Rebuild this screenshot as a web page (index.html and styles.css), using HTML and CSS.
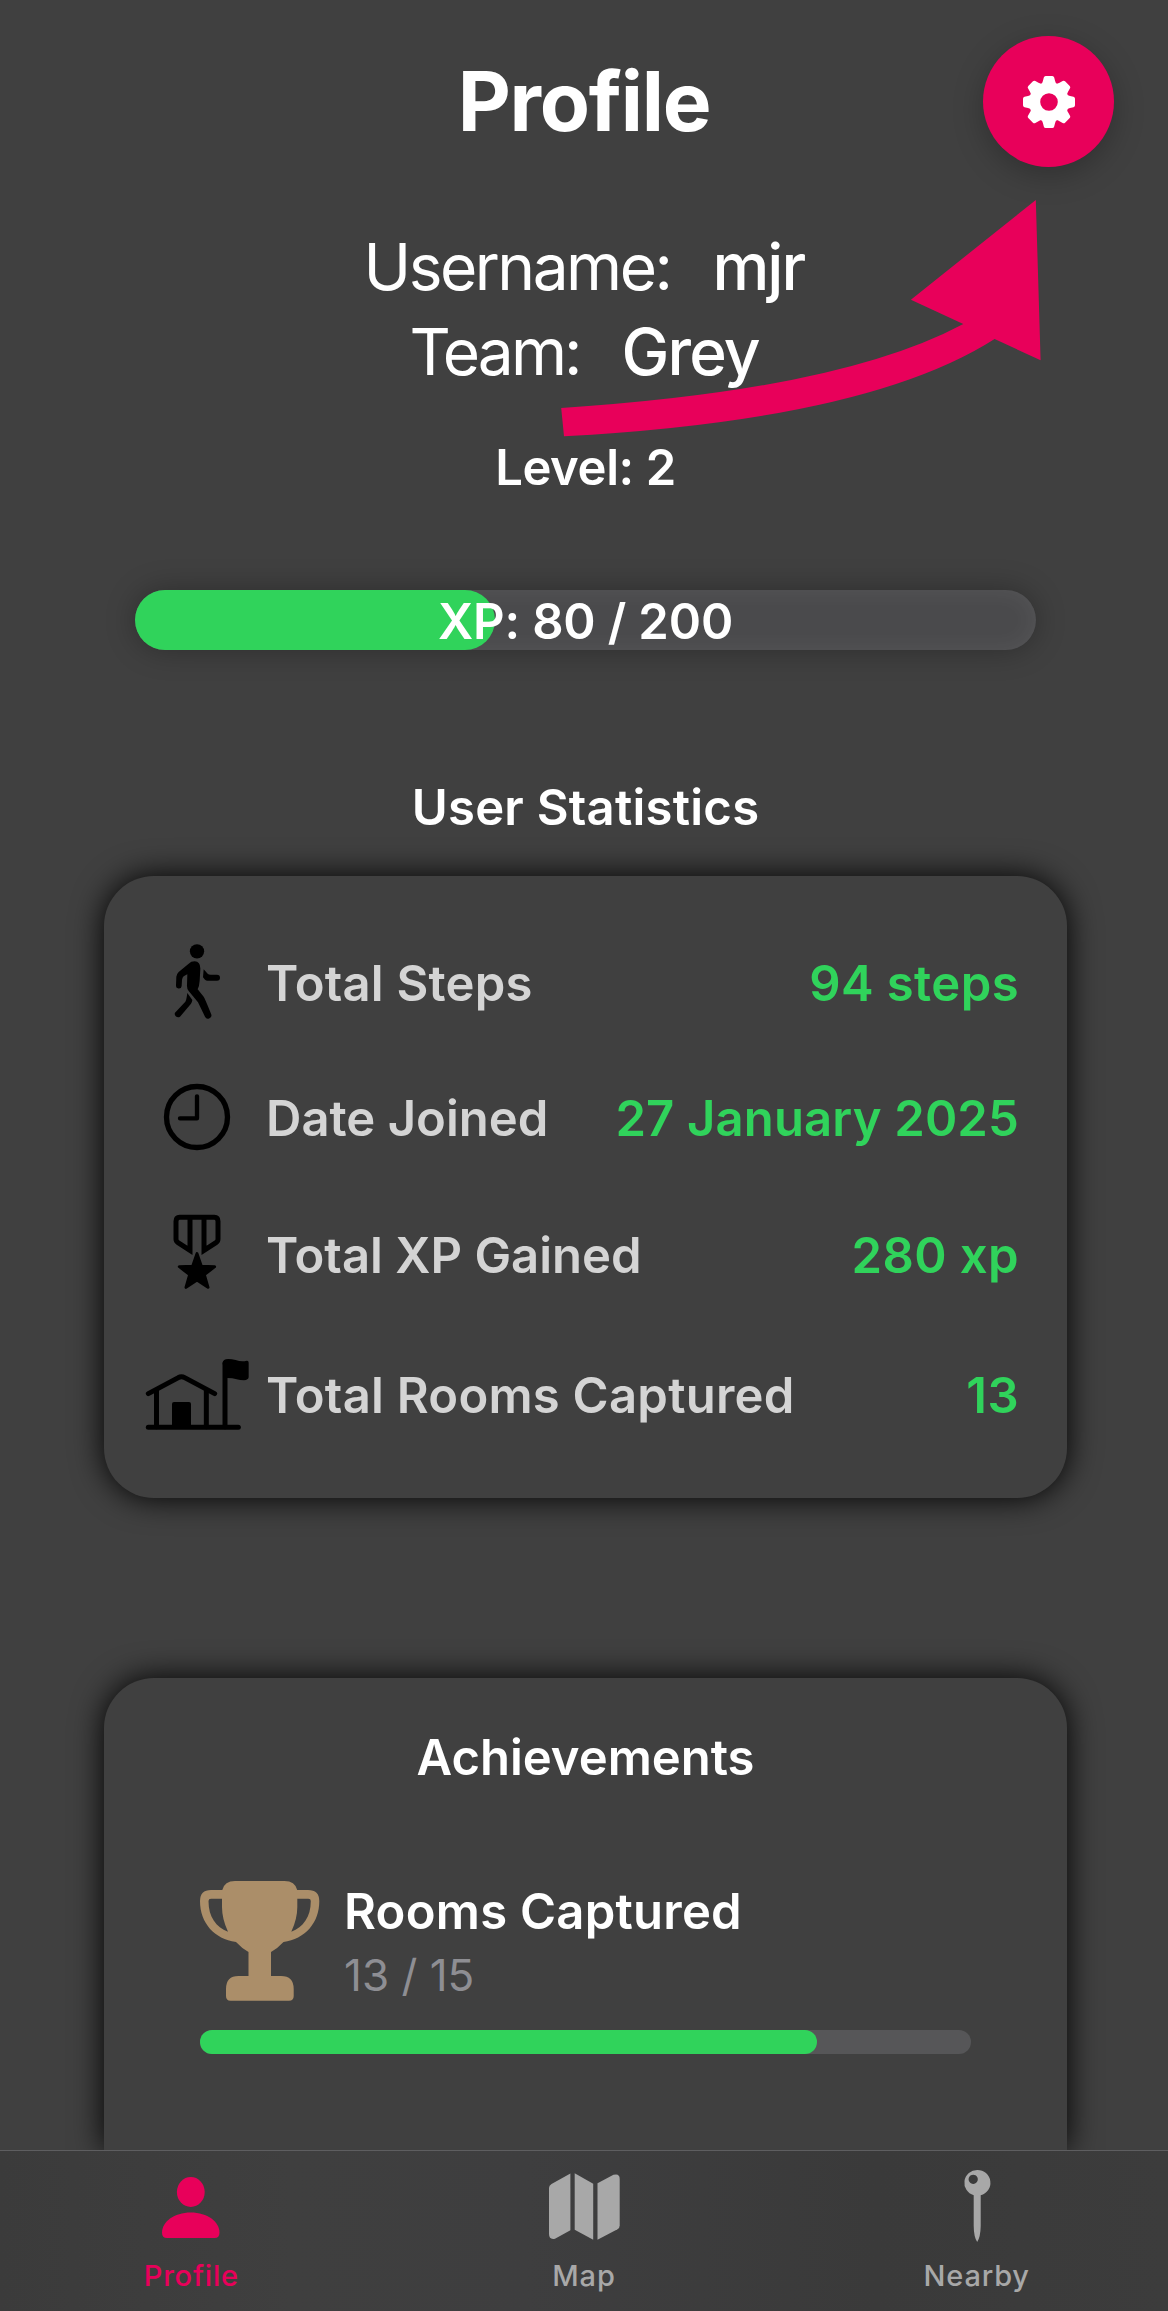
FILE: index.html
```html
<!DOCTYPE html>
<html lang="en">
<head>
<meta charset="utf-8">
<title>Profile</title>
<link rel="stylesheet" href="styles.css">
</head>
<body>
<div class="screen">
  <main class="content">
    <header class="header">
      <h1 class="title">Profile</h1>
      <button class="settings" aria-label="Settings">
        <svg class="gear" viewBox="-26 -26 52 52">
          <defs><path id="tooth" d="M-8.500 -17 Q-6.400 -19 -6.100 -21 L-5.200 -24.500 Q-4.800 -26 -3.300 -26 H3.300 Q4.800 -26 5.200 -24.500 L6.100 -21 Q6.400 -19 8.500 -17 Z"/></defs>
          <g fill="#fff">
            <use href="#tooth"/>
            <use href="#tooth" transform="rotate(45)"/>
            <use href="#tooth" transform="rotate(90)"/>
            <use href="#tooth" transform="rotate(135)"/>
            <use href="#tooth" transform="rotate(180)"/>
            <use href="#tooth" transform="rotate(225)"/>
            <use href="#tooth" transform="rotate(270)"/>
            <use href="#tooth" transform="rotate(315)"/>
            <circle r="14.300" fill="none" stroke="#fff" stroke-width="11"/>
          </g>
        </svg>
      </button>
    </header>

    <section class="identity">
      <p class="identity-row"><span class="key">Username:</span><span class="val">mjr</span></p>
      <p class="identity-row team"><span class="key">Team:</span><span class="val">Grey</span></p>
    </section>

    <p class="level">Level: 2</p>
    <div class="xp">
      <div class="xp-fill" style="width:40%"></div>
      <span class="xp-text">XP: 80 / 200</span>
    </div>

    <h2 class="section-title stats-title">User Statistics</h2>
    <section class="card stats">
      <div class="stat steps">
        <svg class="stat-icon" viewBox="165 249 312 240">
          <circle cx="321" cy="274" r="21.500"/>
          <path d="M296 311 Q303 304 314 304 Q332 305 331 328 L329 362 Q328 378 323 388 L341 410 Q345 416 363 461 A9.500 9.500 0 0 1 345 470 L324 427 L296 393 Q290 386 291 374 L292 343 L281 349 Q277 352 276 360 L275 378 A8.500 8.500 0 0 1 258 376 L259 350 Q260 342 266 336 Z"/>
          <path d="M292 399 L307 420 Q306 427 303 431 L270 470 A10 10 0 0 1 255 458 L286 425 Q289 420 290 412 Z"/>
          <path d="M341 328 L353 341 Q356 344 362 344 H381 A9 9 0 0 1 381 362 H353 Q348 362 345 359 L339 352 Z"/>
        </svg>
        <span class="label">Total Steps</span><span class="value">94 steps</span>
      </div>
      <div class="stat joined">
        <svg class="stat-icon" viewBox="165 654 312 240" fill="none" stroke="#000">
          <circle cx="321" cy="771" r="91.500" stroke-width="16"/>
          <path d="M321 709 V775 H270" stroke-width="13" stroke-linecap="round" stroke-linejoin="round"/>
        </svg>
        <span class="label">Date Joined</span><span class="value">27 January 2025</span>
      </div>
      <div class="stat gained">
        <svg class="stat-icon" viewBox="165 135 312 240">
          <path d="M300 142 V241 L264 218 Q258 214 258 207 V154 Q258 142 269 142 H373 Q384 142 384 154 V207 Q384 214 378 218 L342 241 V142" fill="none" stroke="#000" stroke-width="15"/>
          <path d="M321 251 L334 289 L374 290 L343 314 L354 352 L321 330 L288 352 L299 314 L268 290 L308 289 Z" stroke="#000" stroke-width="9" stroke-linejoin="round"/>
        </svg>
        <span class="label">Total XP Gained</span><span class="value">280 xp</span>
      </div>
      <div class="stat rooms">
        <svg class="stat-icon" viewBox="165 555 312 240">
          <g fill="none" stroke="#000" stroke-width="15" stroke-linecap="round">
            <path d="M175 772 H445"/>
            <path d="M175 671 L265 623 Q274 617 284 623 L374 671"/>
            <path d="M199.500 662 V770"/>
            <path d="M349 662 V770"/>
            <path d="M405 580 V770"/>
          </g>
          <path d="M246 770 V702 Q246 696 252 696 H297 Q303 696 303 702 V770 Z"/>
          <path d="M398 580 Q398 567 415 567 Q425 567 437 570 Q455 576 470 572 Q476 571 476 578 V622 Q475 630 462 631 Q450 631 440 628 Q425 623 405 624 Z"/>
        </svg>
        <span class="label">Total Rooms Captured</span><span class="value">13</span>
      </div>
    </section>

    <section class="card achievements">
      <h2 class="section-title achievements-title">Achievements</h2>
      <div class="achievement">
        <svg class="trophy" viewBox="0 0 120 120" fill="#ab8e69">
          <path fill-rule="evenodd" d="M22.300 9 Q24.500 0 35 0 H84.500 Q95 0 97.200 9 H108 Q119.300 9 119.300 20 C119.300 42 105 58 83.500 61 Q78 67 71 71 V95 H81 Q93.700 95 93.700 108 V115 Q93.700 119.700 89 119.700 H30.500 Q26 119.700 26 115 V108 Q26 95 38.500 95 H48.500 V71 Q41.500 67 36 61 C14.500 58 0 42 0 20 Q0 9 11 9 Z M22 17.700 H11 Q8.500 17.700 8.500 20 C8.500 36 16 46 28 50.700 Q22 38 22 26 Z M97.300 17.700 H108.300 Q110.800 17.700 110.800 20 C110.800 36 103.300 46 91.300 50.700 Q97.300 38 97.300 26 Z"/>
        </svg>
        <div class="achievement-text">
          <p class="name">Rooms Captured</p>
          <p class="count">13 / 15</p>
        </div>
      </div>
      <div class="progress"><div class="progress-fill" style="width:80%"></div></div>
    </section>

    <svg class="pointer" viewBox="550 190 500 260" fill="#e8005a">
      <path d="M561.200 408 Q840 390 963.300 324 L910.900 299.700 L1035.800 200 L1040.600 360.300 L994.600 339 Q868 420 564 436.300 Z"/>
    </svg>
  </main>

  <nav class="tabs">
    <a class="tab active">
      <svg class="tab-icon" viewBox="155 2168 74 76">
        <ellipse cx="191.800" cy="2192" rx="13.900" ry="15"/>
        <path d="M168 2238 Q163 2238 163 2232.500 C163 2222 175 2212.500 191.800 2212.500 S220.500 2222 220.500 2232.500 Q220.500 2238 215.500 2238 Z"/>
      </svg>
      <span>Profile</span>
    </a>
    <a class="tab">
      <svg class="tab-icon" viewBox="547 2168 74 76">
        <path d="M549 2188 Q549 2185.500 551.500 2184 L570.400 2173.500 V2230.300 L555 2238.700 Q549 2240 549 2234 Z"/>
        <path d="M574.700 2173.300 L593.200 2183.700 V2239.700 L574.700 2229.700 Z"/>
        <path d="M597.500 2183.300 L613.500 2174.800 Q619.700 2173 619.700 2179 V2225.500 Q619.700 2228 617.500 2229.200 L597.500 2239.700 Z"/>
      </svg>
      <span>Map</span>
    </a>
    <a class="tab">
      <svg class="tab-icon" viewBox="940.500 2168 74 76">
        <path fill-rule="evenodd" d="M977.900 2169.900 a12.900 12.900 0 0 1 3.300 25.400 V2226 Q981 2237 977.700 2242 Q974.300 2237 974.200 2226 V2195.200 A12.900 12.900 0 0 1 977.900 2169.900 Z M973.700 2174.700 a4.600 4.600 0 1 0 .01 0 Z"/>
      </svg>
      <span>Nearby</span>
    </a>
  </nav>
</div>
</body>
</html>
```
FILE: styles.css
```css
body {
  margin: 0;
  background: #404040;
  color: #fff;
  font-family: Inter, "Liberation Sans", sans-serif;
}

h1, h2, p { margin: 0; }

.screen {
  display: flex;
  flex-direction: column;
  height: 2311px;
  overflow: hidden;
}

.content {
  position: relative;
  display: flex;
  flex-direction: column;
  flex: 1;
  min-height: 0;
  overflow: hidden;
}

.header {
  display: grid;
  grid-template-columns: 1fr auto 1fr;
  align-items: center;
  height: 203px;
  padding: 0 54px;
}

.title {
  grid-column: 2;
  font-size: 82px;
  line-height: 100px;
  font-weight: 700;
  letter-spacing: -1.25px;
}

.settings {
  display: flex;
  align-items: center;
  justify-content: center;
  justify-self: end;
  width: 131px;
  height: 131px;
  padding: 0;
  border: 0;
  border-radius: 50%;
  background: #e8005a;
  box-shadow: 0 8px 30px rgba(0, 0, 0, 0.25);
}

.gear {
  width: 52px;
  height: 52px;
}

.identity {
  margin-top: 21px;
  font-size: 64px;
  line-height: 85px;
}

.identity-row {
  display: flex;
  justify-content: center;
  gap: 42px;
}

.key { font-weight: 390; letter-spacing: -2.5px; }
.val { font-weight: 500; letter-spacing: -1.9px; }
.team .key { letter-spacing: -2.9px; }

.level, .xp-text, .section-title, .label, .value, .name {
  font-size: 49px;
  line-height: 60px;
  font-weight: 600;
}

.level {
  margin-top: 44px;
  padding-left: 3px;
  text-align: center;
  letter-spacing: -0.4px;
}

.xp {
  position: relative;
  width: 901px;
  height: 60px;
  margin: 92px 0 0 135px;
  border-radius: 30px;
  background: #4a4a4c;
  box-shadow: 0 0 30px rgba(0, 0, 0, 0.3), inset 0 0 24px rgba(255, 255, 255, 0.07);
}

.xp-fill {
  height: 100%;
  border-radius: 30px;
  background: #30d35b;
}

.xp-text {
  position: absolute;
  inset: 2px 0 0;
  text-align: center;
  letter-spacing: -0.15px;
}

.section-title { text-align: center; }

.stats-title {
  margin-top: 128px;
  padding-left: 3px;
  letter-spacing: 0.25px;
}

.card {
  width: 963px;
  margin-left: 104px;
  box-sizing: border-box;
  border-radius: 50px;
  background: #404040;
  box-shadow: 0 0 32px #000;
}

.stats {
  height: 622px;
  margin-top: 38px;
  padding: 40px 48px 0 41px;
}

.stat {
  display: flex;
  align-items: center;
}

.steps { height: 134px; }
.joined { height: 136px; }
.gained { height: 138px; }
.rooms { height: 142px; }

.stat-icon {
  width: 104px;
  height: 80px;
  margin-right: 17px;
  overflow: visible;
}

.label { padding-top: 2px; color: #d4d4d4; }
.value { margin-left: auto; padding-top: 2px; color: #30d35b; letter-spacing: 0.4px; }

.steps .label { letter-spacing: 0.2px; }
.rooms .label { letter-spacing: 0.25px; }
.joined .value { letter-spacing: 0.15px; }

.achievements {
  flex: 1 0 auto;
  margin-top: 180px;
  padding: 50px 96px 0;
  border-radius: 50px 50px 0 0;
}

.achievement {
  display: flex;
  gap: 24px;
  height: 124px;
  margin-top: 93px;
}

.trophy {
  width: 120px;
  height: 120px;
}

.name { padding-top: 1px; letter-spacing: 0.25px; }

.count {
  margin-top: 3px;
  font-size: 44px;
  line-height: 60px;
  color: #8e8e93;
}

.progress {
  height: 24px;
  margin-top: 25px;
  border-radius: 12px;
  background: #565658;
}

.progress-fill {
  height: 100%;
  border-radius: 12px;
  background: #30d35b;
}

.pointer {
  position: absolute;
  left: 550px;
  top: 190px;
  width: 500px;
  height: 260px;
  pointer-events: none;
}

.tabs {
  display: grid;
  grid-template-columns: repeat(3, 392.7px);
  justify-content: center;
  height: 160px;
  border-top: 1px solid #5e5e60;
  background: linear-gradient(90deg, #3b3b3b, #3f3f3f 25%, #3e3e3f 45%, #3a3a3a 75%, #3c3c3c);
}

.tab {
  display: flex;
  flex-direction: column;
  align-items: center;
  gap: 14px;
  padding-top: 17px;
  color: #a8a8a8;
  font-size: 29px;
  line-height: 36px;
  font-weight: 500;
  letter-spacing: 0.8px;
}

.tab.active { color: #e8005a; }

.tab-icon {
  width: 74px;
  height: 76px;
  fill: currentColor;
}
```
